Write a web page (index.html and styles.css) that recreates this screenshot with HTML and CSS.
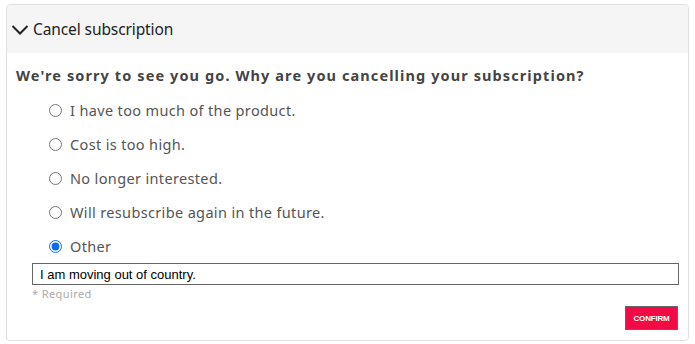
FILE: index.html
```html
<!DOCTYPE html>
<html>
<head>
<meta charset="utf-8">
<link rel="stylesheet" href="styles.css">
</head>
<body>
<div class="wrap">
  <div class="card">
    <div class="card-header">
      <svg class="chev" width="18" height="12" viewBox="0 0 18 12"><path d="M1.5 2 L9 9.5 L16.5 2" fill="none" stroke="#222" stroke-width="2"/></svg>
      <span class="title">Cancel subscription</span>
    </div>
    <div class="card-body">
      <p class="question">We're sorry to see you go. Why are you cancelling your subscription?</p>
      <ul class="options">
        <li><label><input type="radio" name="r"><span>I have too much of the product.</span></label></li>
        <li><label><input type="radio" name="r"><span>Cost is too high.</span></label></li>
        <li><label><input type="radio" name="r"><span>No longer interested.</span></label></li>
        <li><label><input type="radio" name="r"><span>Will resubscribe again in the future.</span></label></li>
        <li><label><input type="radio" name="r" checked><span>Other</span></label></li>
      </ul>
      <div class="other">
        <input class="reason" type="text" value="I am moving out of country.">
        <div class="req">* Required</div>
      </div>
      <div class="actions">
        <button class="confirm">CONFIRM</button>
      </div>
    </div>
  </div>
</div>
</body>
</html>
```
FILE: styles.css
```css
html, body { margin: 0; padding: 0; background: #fff; }
body { font-family: "Source Sans Pro", "Noto Sans", "Open Sans", sans-serif; color: #333; }
.wrap { padding: 4px 6px 0 6px; width: 683px; }
.card {
  border: 1px solid #e0e0e0;
  border-radius: 4px;
  height: 337px;
  box-sizing: border-box;
  overflow: hidden;
}
.card-header {
  background: #f5f5f5;
  height: 48px;
  display: flex;
  align-items: center;
  padding-left: 4px;
  gap: 4px;
}
.chev { display: block; margin-top: 1px; }
.title { font-size: 15.5px; color: #222; letter-spacing: -0.1px; }
.card-body { padding: 12px 9px 0 9px; }
.question {
  margin: 0;
  font-weight: bold;
  font-size: 14.5px;
  letter-spacing: 1.1px;
  color: #444;
  line-height: 20px;
}
.options { list-style: none; margin: 8px 0 0 0; padding: 0 0 0 33px; }
.options li { height: 34px; display: flex; align-items: center; }
.options label { display: flex; align-items: center; gap: 8px; }
.options input { width: 13px; height: 13px; margin: 0; accent-color: #0b6bf5; }
.options span { font-size: 14.5px; color: #555; letter-spacing: 0.35px; }
.other { padding-left: 16px; margin-top: 0; }
.reason {
  display: block;
  box-sizing: border-box;
  width: 647px;
  height: 22px;
  border: 1px solid #666;
  border-radius: 0;
  padding: 0 7px;
  font-family: "Liberation Sans", Arial, sans-serif;
  font-size: 13px;
  color: #000;
  outline: none;
}
.req { font-size: 11px; color: #aaa; letter-spacing: 0.4px; margin-top: 1px; }
.actions { display: flex; justify-content: flex-end; padding-right: 1px; margin-top: 5px; }
.confirm {
  background: #f20a44;
  color: #fff;
  border: 1px solid #666;
  width: 53px;
  height: 24px;
  padding: 0;
  font-family: "Liberation Sans", Arial, sans-serif;
  font-weight: bold;
  font-size: 8px;
  letter-spacing: -0.2px;
}
```
